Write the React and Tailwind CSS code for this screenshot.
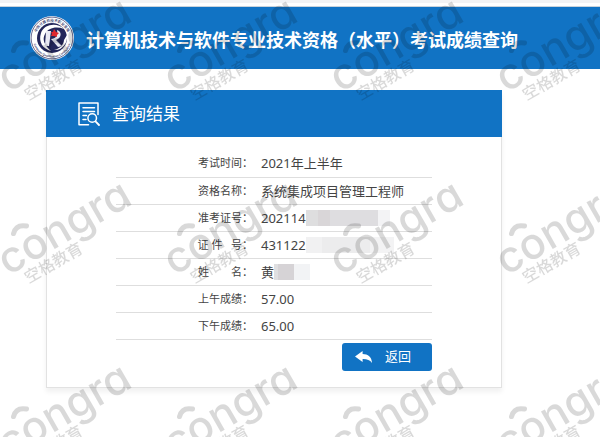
import React from 'react';

const results = [
    { label: '考试时间：', value: '2021年上半年' },
    { label: '资格名称：', value: '系统集成项目管理工程师' },
    { label: '准考证号：', value: '202114', mask: 'ticket' },
    { label: '证 件   号：', value: '431122', mask: 'idcard' },
    { label: '姓　　名：', value: '黄', mask: 'name' },
    { label: '上午成绩：', value: '57.00' },
    { label: '下午成绩：', value: '65.00' }
];

// Grey blocks that hide the private part of a value
const masks = {
    ticket: ['w-3 bg-[#dededf]', 'w-3 bg-[#d9d6d8]', 'w-12 bg-[#dedde0]', 'w-3 bg-[#f3f3f5]'],
    idcard: ['w-4 bg-[#f1f1f2]', 'w-12 bg-[#ececed]', 'w-6 bg-[#f3f3f4]'],
    name: ['w-1 bg-[#dfdfe1]', 'w-4 bg-[#d6d3d6]', 'w-4 bg-[#f2f3f5]']
};

const Mask = ({ type }) => (
    <span className="flex h-4" aria-hidden="true">
        {masks[type].map((block, i) => <span key={i} className={block} />)}
    </span>
);

const Logo = () => (
    <svg className="size-11 shrink-0" viewBox="0 0 44 44" aria-hidden="true">
        <defs>
            <path id="ringTop" d="M5.5 24 A16.6 16.6 0 1 1 38.5 24" />
            <path id="ringBottom" d="M3 25 A19.2 19.2 0 0 0 41 25" />
        </defs>
        <circle cx="22" cy="22" r="22" fill="#fff" />
        <circle cx="22" cy="22" r="20.9" fill="none" stroke="#2a2d63" strokeWidth="0.7" />
        <circle cx="22" cy="22" r="15" fill="#23265a" />
        <text fontSize="3.6" fontWeight="500" fill="#2a2d63" fontFamily="'Noto Sans CJK SC', sans-serif">
            <textPath href="#ringTop" startOffset="50%" textAnchor="middle">中国计算机技术职业资格</textPath>
        </text>
        <text fontSize="2.8" fontWeight="700" fill="#2a2d63" fontFamily="'Liberation Sans', sans-serif">
            <textPath href="#ringBottom" startOffset="50%" textAnchor="middle">Computer Qualification Certification</textPath>
        </text>
        {/* swoosh around the emblem */}
        <path d="M34 13 C27 6 14 8 11 17 C8 26 13 33 21 35 C14 29 12 23 15 18 C18 12 26 10 34 13 Z" fill="#fff" />
        <path d="M37 19 C38 28 31 35 24 34 C30 33 34 28 34 24 Z" fill="#fff" />
        {/* emblem */}
        <path d="M16 15 H21 L19 30 H15 Z" fill="#e9e9f3" />
        <path d="M27 14 C32 15 32 22 26 24 L32 30 L28 31 L21 23 C26 23 28 19 27 14 Z" fill="#e9e9f3" />
        <path d="M24 13 L26 16 L29 17 L27 19 L27 21 L24 20 L21 20 L22 18 L21 16 L23 16 Z" fill="#e0262d" />
    </svg>
);

const SearchDocIcon = () => (
    <svg className="h-6 w-[22px] shrink-0" viewBox="0 0 22 24" fill="none" stroke="#fff" strokeWidth="1.5" strokeLinecap="round" strokeLinejoin="round" aria-hidden="true">
        <path d="M10.5 22.7 H1 V1 H20 V12.5" />
        <path d="M5 5.8 H16.5 M5 9.6 H16.5 M5 13.5 H8.5 M5 17.5 H8" />
        <circle cx="14.2" cy="16" r="4.3" />
        <path d="M17.5 19.4 L21 23" strokeWidth="1.8" />
    </svg>
);

const BackIcon = () => (
    <svg className="h-3 w-[17px] shrink-0" viewBox="0 0 17 12" fill="#fff" aria-hidden="true">
        <path d="M0 5.4 L7.6 0 V3 C13 3 16.8 6 17 12 C14.8 9 12 8 7.6 8.1 V11 Z" />
    </svg>
);

const Watermark = () => (
    <svg className="pointer-events-none absolute inset-0 size-full" aria-hidden="true">
        <defs>
            <pattern id="mark" width="166" height="183" patternUnits="userSpaceOnUse">
                <g transform="translate(8 93) rotate(-30)">
                    <text fontSize="43" fontWeight="500" fontFamily="Inter, sans-serif" className="[font-feature-settings:'cv11']">congra</text>
                    <path d="M26 -34 Q33 -41 41 -34" fill="none" stroke="#000" strokeWidth="5" strokeLinecap="round" />
                    <text x="14" y="17" fontSize="16" fontWeight="500" fontFamily="'Noto Sans CJK SC', sans-serif">空格教育</text>
                </g>
            </pattern>
        </defs>
        <rect width="100%" height="100%" fill="url(#mark)" opacity="0.15" />
    </svg>
);

const App = () => {
    return (
        <div className="relative min-h-screen overflow-hidden bg-white font-['Noto_Sans','Noto_Sans_CJK_SC',sans-serif] text-[#444]">
            <div className="h-[7px] border-t-3 border-b border-t-[#f2f3f5] border-b-[#c9d3dc]" />

            <header className="flex h-[62px] items-center gap-3 bg-[#1173c4] pl-[30px]">
                <Logo />
                <h1 className="pt-1 text-lg font-bold whitespace-nowrap text-white">计算机技术与软件专业技术资格（水平）考试成绩查询</h1>
            </header>

            <main className="mt-[21px] mr-[98px] mb-12 ml-[46px] border border-t-0 border-[#e2e2e2] shadow-[0_4px_5px_rgba(0,0,0,0.06)]">
                <div className="-mx-px flex h-[47px] items-center gap-3 bg-[#1173c4] pl-8">
                    <SearchDocIcon />
                    <h2 className="text-[17px] text-white">查询结果</h2>
                </div>

                <div className="px-[69px] pt-[13px] pb-4">
                    <table className="w-full border-collapse">
                        <tbody>
                            {results.map((row) => (
                                <tr key={row.label} className="h-[27px] border-b border-[#dedede]">
                                    <th scope="row" className="w-[137px] p-0 text-right text-[11px] leading-4 font-normal whitespace-pre">{row.label}</th>
                                    <td className="py-0 pr-0 pl-2 text-[13px] leading-5">
                                        <div className="flex items-center whitespace-nowrap">
                                            {row.value}
                                            {row.mask && <Mask type={row.mask} />}
                                        </div>
                                    </td>
                                </tr>
                            ))}
                        </tbody>
                    </table>

                    <div className="mt-[3px] flex justify-end">
                        <button type="button" className="flex h-7 w-[90px] items-center gap-[13px] rounded-[3px] bg-[#1173c4] pl-[13px] text-[13px] text-white">
                            <BackIcon />
                            返回
                        </button>
                    </div>
                </div>
            </main>

            <Watermark />
        </div>
    );
};

export default App;
